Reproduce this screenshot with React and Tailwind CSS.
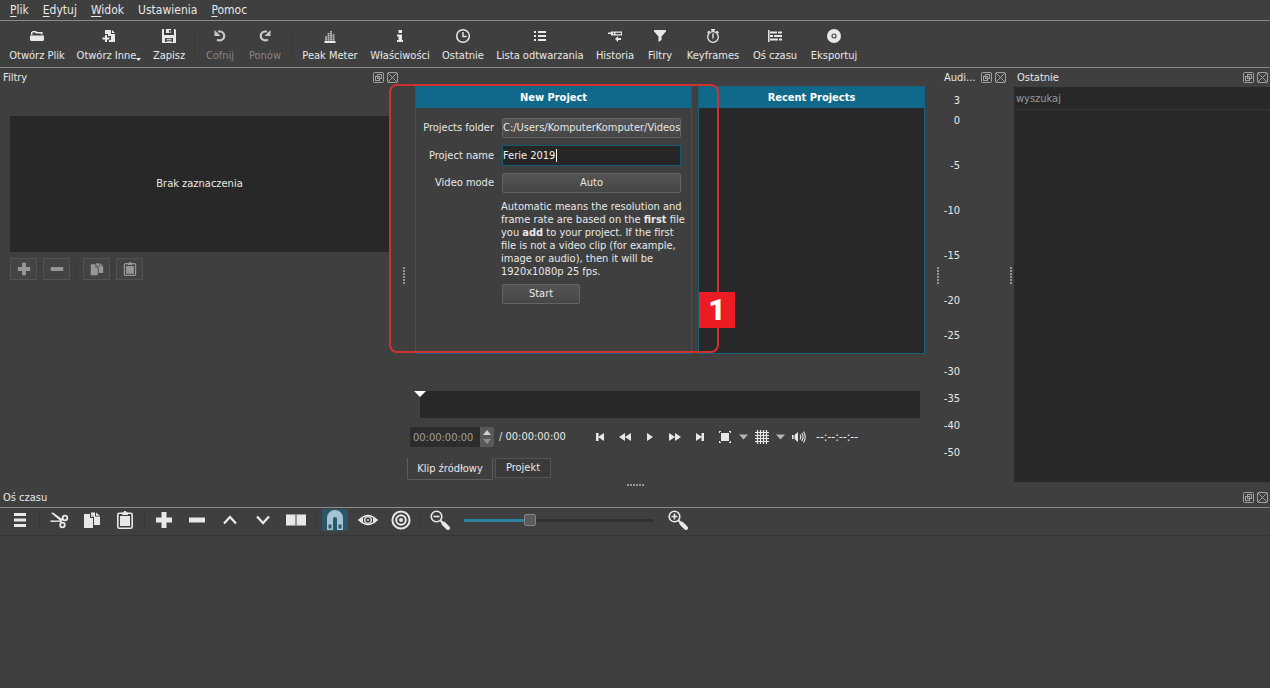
import { useState } from 'react';
import { clsx } from 'clsx';

function Svg({ size = 16, w, className, children }) {
    return (
        <svg
            width={w || size}
            height={size}
            viewBox={`0 0 ${w || size} ${size}`}
            fill="currentColor"
            className={clsx('block shrink-0', className)}
            aria-hidden="true"
        >
            {children}
        </svg>
    );
}

/* ---------- icons ---------- */

const icons = {
    folder: (
        <Svg>
            <path d="M2 7V4.500L3.500 3H7l1 1h5.500V6.500H12V5.500H7L6 4.500H3.500V7z" />
            <path d="M1 7.500h14V12l-1 1H2l-1-1z" />
        </Svg>
    ),
    openOther: (
        <Svg>
            <path d="M4 2h6v4h4v8H8v-2h2V8H7V6H4z" />
            <path d="M11 2l3 3h-3z" />
            <path d="M4 7h2v2.500h2.500v2H6V14H4v-2.500H1.500v-2H4z" />
        </Svg>
    ),
    save: (
        <Svg>
            <path fillRule="evenodd" d="M1 1h2v6h10V1h1l1 1v13H1zM4 10v4h8v-4z" />
            <path d="M5 1h5v4H5zM5.500 10.800h5v1h-5zM5.500 12.700h5v1h-5z" />
            <path d="M8 2h1.500v2.500H8z" fill="#3f3f3f" />
        </Svg>
    ),
    undo: (
        <Svg>
            <path d="M6 3.500h2.500a4.500 4.500 0 1 1-3.500 8" fill="none" stroke="currentColor" strokeWidth="2.200" />
            <path d="M2.500 2v6H8.500z" />
        </Svg>
    ),
    redo: (
        <Svg>
            <path d="M10 3.500H7.500a4.500 4.500 0 1 0 3.500 8" fill="none" stroke="currentColor" strokeWidth="2.200" />
            <path d="M13.500 2v6H7.500z" />
        </Svg>
    ),
    peak: (
        <Svg>
            <path d="M2.500 13h11v2h-11z" />
            <path d="M4 12.500V8M6.500 12.500V5M9 12.500V3M11.500 12.500V6" stroke="currentColor" strokeWidth="1.800" strokeDasharray="1.300 0.700" fill="none" />
        </Svg>
    ),
    info: (
        <Svg>
            <path d="M6.500 2h3.500v3H6.500zM5 6.500h5V12h1v2H5v-2h1.500V8.500H5z" />
        </Svg>
    ),
    clock: (
        <Svg>
            <circle cx="8" cy="8" r="6.300" fill="none" stroke="currentColor" strokeWidth="1.500" />
            <path d="M8 4v4.500h3.500" fill="none" stroke="currentColor" strokeWidth="1.400" />
        </Svg>
    ),
    list: (
        <Svg>
            <path d="M2 3h2v2H2zM2 7h2v2H2zM2 11h2v2H2zM6 3h8v2H6zM6 7h8v2H6zM6 11h8v2H6z" />
        </Svg>
    ),
    history: (
        <Svg>
            <path d="M1 4.500h3V3.500h11v4H4V6H1z" />
            <path d="M6 4.800h1v1.400H6zM8.500 4.800H14v1.400H8.500z" fill="#3f3f3f" />
            <path d="M8 11l3-3v2h3v2h-3v2z" />
        </Svg>
    ),
    funnel: (
        <Svg>
            <path d="M2 2h12v1.500L9.500 8.500V12L6.500 14V8.500L2 3.500z" />
        </Svg>
    ),
    stopwatch: (
        <Svg>
            <circle cx="8" cy="9" r="5.300" fill="none" stroke="currentColor" strokeWidth="1.300" />
            <path d="M6 1h4v1.500H6zM7.300 2h1.400v2H7.300zM7.300 5.500h1.400V9L8 12 7.300 9zM12 2.500l2 2-1 1-2-2zM2 4.500l2-2 1 1-2 2z" />
        </Svg>
    ),
    timeline: (
        <Svg>
            <path d="M1 2h1.500v12H1zM3 3.500h7v2H3zM11 3.500h4v2h-4zM3 7h3v2H3zM7 7h8v2H7zM3 10.500h8v2H3zM12 10.500h3v2h-3z" />
        </Svg>
    ),
    disc: (
        <Svg>
            <circle cx="8" cy="8" r="7" />
            <circle cx="8" cy="8" r="2" fill="none" stroke="#3f3f3f" strokeWidth="1.200" />
        </Svg>
    ),
    add: (
        <Svg size={18}>
            <path d="M6.500 1h5v5.500H17v5h-5.500V17h-5v-5.500H1v-5h5.500z" />
        </Svg>
    ),
    remove: (
        <Svg size={18}>
            <path d="M1 6.500h16v5H1z" />
        </Svg>
    ),
    copy: (
        <Svg size={18}>
            <path d="M1 3h6v4h3v10H1z" />
            <path d="M8 1.500h4v4h5V14h-6V6.200L8 3.500z" />
            <path d="M13 1.500l4 3.300h-4zM8 4l2 2H8z" />
        </Svg>
    ),
    paste: (
        <Svg size={18}>
            <rect x="1.800" y="2.200" width="14.400" height="15" rx="1.500" fill="none" stroke="currentColor" strokeWidth="1.600" />
            <path d="M4 5h10v10H4zM6 1.500h1.500L8 0h2l.500 1.500H12V4H6z" />
        </Svg>
    ),
    menu: (
        <Svg size={18}>
            <path d="M3 2h12v3H3zM3 7.500h12v3H3zM3 13h12v3H3z" />
        </Svg>
    ),
    cut: (
        <Svg size={18} w={20}>
            <path d="M2 2l2-.5 9 6.500-1.500 2zM1 9.500h11l1 1.300L2 11z" />
            <circle cx="16" cy="7" r="2.300" fill="none" stroke="currentColor" strokeWidth="1.800" />
            <circle cx="13.500" cy="14" r="2.300" fill="none" stroke="currentColor" strokeWidth="1.800" />
            <path d="M10 8l4-1v2l-1.500 1 1.500 2-2 .5z" />
        </Svg>
    ),
    up: (
        <Svg size={18}>
            <path d="M3 12.500l6-6.500 6 6.500" fill="none" stroke="currentColor" strokeWidth="2.300" />
        </Svg>
    ),
    down: (
        <Svg size={18}>
            <path d="M3 5.500l6 6.500 6-6.500" fill="none" stroke="currentColor" strokeWidth="2.300" />
        </Svg>
    ),
    split: (
        <Svg size={18} w={20}>
            <path d="M0 3.500h9v11H0zM11 3.500h9v11h-9z" />
            <path d="M10 3.500v11" stroke="currentColor" strokeWidth="2" strokeDasharray="1 1" />
        </Svg>
    ),
    magnet: (
        <Svg size={20} w={18}>
            <path fillRule="evenodd" d="M1 20V8a8 8 0 0 1 16 0v12h-6V9a2 2 0 0 0-4 0v11zM2.500 14.500v4h3v-4zM12.500 14.500v4h3v-4z" />
        </Svg>
    ),
    eye: (
        <Svg size={18} w={20}>
            <path d="M1 9q9-9 18 0q-9 9-18 0z" fill="none" stroke="currentColor" strokeWidth="1.600" />
            <circle cx="10" cy="9" r="3.300" fill="none" stroke="currentColor" strokeWidth="1.300" />
            <circle cx="10" cy="9" r="1" />
            <path d="M1 9l4-2.500v5zM19 9l-4-2.500v5z" />
        </Svg>
    ),
    target: (
        <Svg size={20}>
            <circle cx="10" cy="10" r="8.600" fill="none" stroke="currentColor" strokeWidth="2" />
            <circle cx="10" cy="10" r="4.800" fill="none" stroke="currentColor" strokeWidth="2" />
            <circle cx="10" cy="10" r="2" />
        </Svg>
    ),
    zoomOut: (
        <Svg size={20}>
            <circle cx="6.500" cy="6.500" r="5.300" fill="none" stroke="currentColor" strokeWidth="1.600" />
            <path d="M3.500 5.700h6v1.600h-6z" />
            <path d="M10.500 10.500L13 13" stroke="currentColor" strokeWidth="2" />
            <path d="M13.500 13.500L18 18" stroke="currentColor" strokeWidth="4" strokeLinecap="round" />
        </Svg>
    ),
    zoomIn: (
        <Svg size={20}>
            <circle cx="6.500" cy="6.500" r="5.300" fill="none" stroke="currentColor" strokeWidth="1.600" />
            <path d="M3.500 5.700h2.200V3.500h1.600v2.200h2.200v1.600H7.300v2.200H5.700V7.300H3.500z" />
            <path d="M10.500 10.500L13 13" stroke="currentColor" strokeWidth="2" />
            <path d="M13.500 13.500L18 18" stroke="currentColor" strokeWidth="4" strokeLinecap="round" />
        </Svg>
    ),
    first: (
        <Svg size={14}>
            <path d="M3 3h2.500v8H3zM11 3v8L5 7z" />
        </Svg>
    ),
    rewind: (
        <Svg size={14}>
            <path d="M7 3v8L1 7zM13 3v8L7 7z" />
        </Svg>
    ),
    play: (
        <Svg size={14}>
            <path d="M4 3l6 4-6 4z" />
        </Svg>
    ),
    forward: (
        <Svg size={14}>
            <path d="M1 3l6 4-6 4zM7 3l6 4-6 4z" />
        </Svg>
    ),
    last: (
        <Svg size={14}>
            <path d="M3 3l6 4-6 4zM8.500 3H11v8H8.500z" />
        </Svg>
    ),
    zoomFit: (
        <Svg size={14}>
            <path d="M3 3h8v8H3zM1 1h2v1H2v1H1zM11 1h2v2h-1V2h-1zM1 11h1v1h1v1H1zM12 11h1v2h-2v-1h1z" />
        </Svg>
    ),
    grid: (
        <Svg size={14}>
            <path d="M2.500 0v14M5.500 0v14M8.500 0v14M11.500 0v14M0 2.500h14M0 5.500h14M0 8.500h14M0 11.500h14" stroke="currentColor" strokeWidth="1.200" />
        </Svg>
    ),
    volume: (
        <Svg size={14}>
            <path d="M0 5h1.500v4H0zM2.500 5L6 2v10L2.500 9z" />
            <path d="M8 4.500q1.500 2.500 0 5M9.800 3q2.500 4 0 8M11.500 1.500q3.500 5.500 0 11" fill="none" stroke="currentColor" strokeWidth="1.100" />
        </Svg>
    ),
    caret: (
        <Svg size={6} w={9}>
            <path d="M0 .500h9L4.500 5.500z" />
        </Svg>
    ),
};

/* ---------- data ---------- */

const menus = [
    { key: 'P', rest: 'lik' },
    { key: 'E', rest: 'dytuj' },
    { key: 'W', rest: 'idok' },
    { key: '', rest: 'Ustawienia' },
    { key: 'P', rest: 'omoc' },
];

const tools = [
    { label: 'Otwórz Plik', icon: 'folder', width: 'w-[68px]' },
    { label: 'Otwórz Inne', icon: 'openOther', width: 'w-[76px]', more: true },
    { label: 'Zapisz', icon: 'save', width: 'w-[44px]' },
    null,
    { label: 'Cofnij', icon: 'undo', width: 'w-[44px]', disabled: true },
    { label: 'Ponów', icon: 'redo', width: 'w-[46px]', disabled: true },
    null,
    { label: 'Peak Meter', icon: 'peak', width: 'w-[70px]' },
    { label: 'Właściwości', icon: 'info', width: 'w-[70px]' },
    { label: 'Ostatnie', icon: 'clock', width: 'w-[56px]' },
    { label: 'Lista odtwarzania', icon: 'list', width: 'w-[98px]' },
    { label: 'Historia', icon: 'history', width: 'w-[52px]' },
    { label: 'Filtry', icon: 'funnel', width: 'w-[38px]' },
    { label: 'Keyframes', icon: 'stopwatch', width: 'w-[68px]' },
    { label: 'Oś czasu', icon: 'timeline', width: 'w-[56px]' },
    { label: 'Eksportuj', icon: 'disc', width: 'w-[62px]' },
];

const levels = [
    { db: '3', gap: 'mt-0' },
    { db: '0', gap: 'mt-0' },
    { db: '-5', gap: 'mt-[25px]' },
    { db: '-10', gap: 'mt-[25px]' },
    { db: '-15', gap: 'mt-[25px]' },
    { db: '-20', gap: 'mt-[25px]' },
    { db: '-25', gap: 'mt-[15px]' },
    { db: '-30', gap: 'mt-[16px]' },
    { db: '-35', gap: 'mt-[7px]' },
    { db: '-40', gap: 'mt-[7px]' },
    { db: '-50', gap: 'mt-[7px]' },
];

const timelineTools = [
    { icon: 'menu', label: 'Menu' },
    null,
    { icon: 'cut', label: 'Wytnij' },
    { icon: 'copy', label: 'Kopiuj' },
    { icon: 'paste', label: 'Wklej' },
    null,
    { icon: 'add', label: 'Dodaj' },
    { icon: 'remove', label: 'Usuń' },
    { icon: 'up', label: 'Podnieś' },
    { icon: 'down', label: 'Nadpisz' },
    { icon: 'split', label: 'Podziel' },
    null,
    { icon: 'magnet', label: 'Przyciąganie', active: true },
    { icon: 'eye', label: 'Podgląd' },
    { icon: 'target', label: 'Ripple' },
    null,
    { icon: 'zoomOut', label: 'Pomniejsz' },
];

/* ---------- small parts ---------- */

function DockTitle({ children }) {
    return (
        <div className="flex h-[19px] shrink-0 items-center pr-[2px] pl-[3px]">
            <h2 className="flex-1 whitespace-nowrap">{children}</h2>
            <div className="flex gap-[3px] text-[#a0a0a0]">
                <button aria-label="Odepnij">
                    <Svg size={11}>
                        <g fill="none" stroke="currentColor">
                            <rect x=".5" y=".5" width="10" height="10" rx="1" />
                            <rect x="4.500" y="2.500" width="4" height="4" />
                            <rect x="2.500" y="4.500" width="4" height="4" />
                        </g>
                    </Svg>
                </button>
                <button aria-label="Zamknij">
                    <Svg size={11}>
                        <g fill="none" stroke="currentColor">
                            <rect x=".5" y=".5" width="10" height="10" rx="1" />
                            <path d="M1 1l9 9M10 1l-9 9" />
                        </g>
                    </Svg>
                </button>
            </div>
        </div>
    );
}

function Splitter({ className }) {
    return (
        <div className={clsx('flex shrink-0 flex-col items-center justify-center gap-px', className)}>
            {[0, 1, 2, 3, 4, 5].map((i) => (
                <span key={i} className="size-[2px] bg-[#959595]" />
            ))}
        </div>
    );
}

function Separator() {
    return <div className="flex w-[6px] justify-center"><span className="h-5 w-px bg-[#363636]" /></div>;
}

const raised = 'rounded-[2px] border border-[#646464] bg-linear-to-b from-[#545454] to-[#464646]';

/* ---------- sections ---------- */

function Toolbar() {
    return (
        <div className="flex h-[47px] items-center border-b border-[#8c8c8c] pl-[3px]">
            {tools.map((t, i) =>
                t ? (
                    <button
                        key={t.label}
                        disabled={t.disabled}
                        className={clsx('flex shrink-0 flex-col items-center gap-1 pt-1 whitespace-nowrap', t.width)}
                    >
                        <span className={clsx(t.disabled && 'text-[#c8c8c8]')}>{icons[t.icon]}</span>
                        <span className={clsx('flex items-end leading-4', t.disabled && 'text-[#858585]')}>
                            {t.label}
                            {t.more && (
                                <Svg size={4} w={5} className="mb-[2px]">
                                    <path d="M0 0h5L2.500 3z" />
                                </Svg>
                            )}
                        </span>
                    </button>
                ) : (
                    <div key={i} className="flex w-[7px] shrink-0 justify-center">
                        <span className="h-6 w-px bg-[#383838]" />
                    </div>
                )
            )}
        </div>
    );
}

function FiltersDock() {
    return (
        <section className="w-[400px] shrink-0">
            <DockTitle>Filtry</DockTitle>
            <div className="mt-[29px] mr-[11px] ml-[10px] flex h-[136px] items-center justify-center bg-[#282828]">
                Brak zaznaczenia
            </div>
            <div className="mt-[6px] ml-[10px] flex items-center gap-[6px] text-[#979797]">
                {['add', 'remove', null, 'copy', 'paste'].map((name) =>
                    name ? (
                        <button
                            key={name}
                            aria-label={name}
                            className="flex h-[22px] w-[27px] items-center justify-center border border-[#525252] bg-[#434343] [&>svg]:size-[14px]"
                        >
                            {icons[name]}
                        </button>
                    ) : (
                        <span key="sep" className="h-4 w-px bg-[#363636]" />
                    )
                )}
            </div>
        </section>
    );
}

function NewProject() {
    const [name, setName] = useState('Ferie 2019');

    return (
        <div className="w-[277px] shrink-0 border border-[#14627e]">
            <h3 className="flex h-[21px] items-center justify-center bg-[#10698a] pt-px font-bold text-white">
                New Project
            </h3>
            <form
                className="grid grid-cols-[78px_minmax(0,1fr)] items-center gap-x-2 pt-[10px] pr-[10px]"
                onSubmit={(e) => e.preventDefault()}
            >
                <label htmlFor="folder" className="text-right">Projects folder</label>
                <button id="folder" type="button" className={clsx('h-5 whitespace-nowrap', raised)}>
                    C:/Users/KomputerKomputer/Videos
                </button>

                <label htmlFor="name" className="mt-[7px] text-right">Project name</label>
                <div className="relative mt-[7px]">
                    <input
                        id="name"
                        value={name}
                        onChange={(e) => setName(e.target.value)}
                        className="block h-[21px] w-full border border-[#145a73] bg-[#262626] text-[#f0f0f0] outline-none"
                    />
                    <span className="absolute top-[4px] left-[54px] h-[13px] w-px bg-white" />
                </div>

                <label htmlFor="mode" className="mt-[7px] text-right">Video mode</label>
                <button id="mode" type="button" className={clsx('mt-[7px] h-5', raised)}>Auto</button>

                <p className="col-start-2 -ml-px mt-[7px] leading-[13px] whitespace-nowrap">
                    Automatic means the resolution and
                    <br />
                    frame rate are based on the <b>first</b> file
                    <br />
                    you <b>add</b> to your project. If the first
                    <br />
                    file is not a video clip (for example,
                    <br />
                    image or audio), then it will be
                    <br />
                    1920x1080p 25 fps.
                </p>
                <button type="submit" className={clsx('col-start-2 mt-[6px] h-5 w-[78px]', raised)}>Start</button>
            </form>
        </div>
    );
}

function Player() {
    return (
        <section className="flex min-w-0 flex-1 flex-col pt-[18px]">
            <div className="flex h-[268px] gap-[6px] pr-[10px] pl-2">
                <NewProject />
                <div className="flex-1 border border-[#14627e] bg-[#282828]">
                    <h3 className="flex h-[21px] items-center justify-center bg-[#10698a] pt-px font-bold text-white">
                        Recent Projects
                    </h3>
                </div>
            </div>

            <div className="relative mt-[37px] mr-[15px] ml-[13px] h-[27px] bg-[#282828]">
                <Svg size={7} w={12} className="absolute top-0 -left-[6px] text-white">
                    <path d="M0 0h12L6 6z" />
                </Svg>
            </div>

            <div className="mt-[9px] flex h-5 items-center pl-[3px]">
                <input
                    aria-label="Pozycja"
                    defaultValue="00:00:00:00"
                    className="h-5 w-[70px] bg-[#2c2c2c] pl-[3px] text-[#a0a0a0] outline-none"
                />
                <div className="flex h-5 w-[14px] flex-col items-center justify-between rounded-r-[2px] bg-[#595959] py-[3px] text-[#d0d0d0]">
                    <button aria-label="Więcej">
                        <Svg size={5} w={8}><path d="M0 5h8L4 0z" /></Svg>
                    </button>
                    <button aria-label="Mniej" className="text-[#8e8e8e]">
                        <Svg size={5} w={8}><path d="M0 0h8L4 5z" /></Svg>
                    </button>
                </div>
                <span className="ml-[5px] w-[88px] whitespace-nowrap">/ 00:00:00:00</span>
                {['first', 'rewind', 'play', 'forward', 'last', 'zoomFit'].map((name) => (
                    <button key={name} aria-label={name} className="flex w-[25px] justify-center">
                        {icons[name]}
                    </button>
                ))}
                <button aria-label="Powiększenie" className="flex w-[12px] justify-center text-[#b4b4b4]">{icons.caret}</button>
                <button aria-label="Siatka" className="flex w-[25px] justify-center">{icons.grid}</button>
                <button aria-label="Opcje siatki" className="flex w-[12px] justify-center text-[#b4b4b4]">{icons.caret}</button>
                <button aria-label="Głośność" className="flex w-[25px] justify-center">{icons.volume}</button>
                <span className="ml-[5px] text-[12px]">--:--:--:--</span>
            </div>

            <div role="tablist" className="mt-[11px] flex h-[22px] items-start gap-[2px]">
                <button role="tab" aria-selected="true" className="h-[22px] w-[86px] rounded-b-[2px] border border-t-0 border-[#5c5c5c]">
                    Klip źródłowy
                </button>
                <button role="tab" aria-selected="false" className="h-5 w-[56px] border border-[#555] bg-[#3a3a3a]">
                    Projekt
                </button>
            </div>
        </section>
    );
}

function AudioDock() {
    return (
        <section className="w-[67px] shrink-0">
            <DockTitle>Audi...</DockTitle>
            <div className="mt-1 flex w-[19px] flex-col items-end">
                {levels.map((l) => (
                    <span key={l.db} className={clsx('h-5 leading-5', l.gap)}>{l.db}</span>
                ))}
            </div>
        </section>
    );
}

function RecentDock() {
    return (
        <section className="flex w-[256px] shrink-0 flex-col">
            <DockTitle>Ostatnie</DockTitle>
            <input
                aria-label="wyszukaj"
                placeholder="wyszukaj"
                className="h-[23px] border-b border-[#353535] bg-[#282828] px-[2px] pt-px outline-none placeholder:text-[#9a9a9a]"
            />
            <div className="flex-1 bg-[#282828]" />
        </section>
    );
}

function Timeline() {
    const [zoom, setZoom] = useState(34);

    return (
        <section>
            <DockTitle>Oś czasu</DockTitle>
            <div className="flex h-[29px] items-center border-t border-b border-t-[#8c8c8c] border-b-[#353535] pb-[3px] pl-[3px]">
                {timelineTools.map((t, i) =>
                    t ? (
                        <button key={t.icon} aria-label={t.label} className="flex w-[33px] justify-center">
                            <span
                                className={clsx(
                                    'flex h-[22px] w-[26px] items-center justify-center',
                                    t.active && 'bg-[#2b566a] text-[#a3c4d2]'
                                )}
                            >
                                {icons[t.icon]}
                            </span>
                        </button>
                    ) : (
                        <Separator key={i} />
                    )
                )}
                <input
                    type="range"
                    aria-label="Skala osi czasu"
                    value={zoom}
                    onChange={(e) => setZoom(e.target.value)}
                    className="mx-2 h-3 w-[189px] appearance-none bg-[linear-gradient(to_right,#2c82a3_34%,#303030_34%)] bg-[length:100%_3px] bg-center bg-no-repeat [&::-webkit-slider-thumb]:size-3 [&::-webkit-slider-thumb]:appearance-none [&::-webkit-slider-thumb]:rounded-[2px] [&::-webkit-slider-thumb]:border [&::-webkit-slider-thumb]:border-[#858585] [&::-webkit-slider-thumb]:bg-[#5a5a5a]"
                />
                <button aria-label="Powiększ" className="flex w-[33px] justify-center">{icons.zoomIn}</button>
            </div>
        </section>
    );
}

export default function App() {
    return (
        <div className="min-h-screen bg-[#3f3f3f] font-['DejaVu_Sans_Condensed','DejaVu_Sans',sans-serif] text-[11px] leading-4 text-[#e8e8e8]">
            <nav className="flex h-[21px] items-center gap-[14px] border-b border-[#8c8c8c] pl-[10px] text-[12px]">
                {menus.map((m) => (
                    <button key={m.key + m.rest}>
                        <span className="underline underline-offset-2">{m.key}</span>
                        {m.rest}
                    </button>
                ))}
            </nav>
            <Toolbar />

            <main className="relative flex h-[414px]">
                <FiltersDock />
                <Splitter className="w-[7px]" />
                <Player />
                <Splitter className="w-[6px]" />
                <AudioDock />
                <Splitter className="w-[6px]" />
                <RecentDock />

                <div className="pointer-events-none absolute top-[16px] left-[389px] h-[269px] w-[330px] rounded-[8px] border-2 border-[#d0312f]" />
                <div className="absolute top-[224px] left-[699px] flex size-[36px] items-center justify-center bg-[#ed1c24] font-['Roboto',sans-serif] text-[30px] leading-none font-black text-white">
                    1
                </div>
            </main>

            <div className="flex h-[6px] items-center justify-center gap-px">
                {[0, 1, 2, 3, 4, 5].map((i) => (
                    <span key={i} className="size-[2px] bg-[#959595]" />
                ))}
            </div>
            <Timeline />
        </div>
    );
}
